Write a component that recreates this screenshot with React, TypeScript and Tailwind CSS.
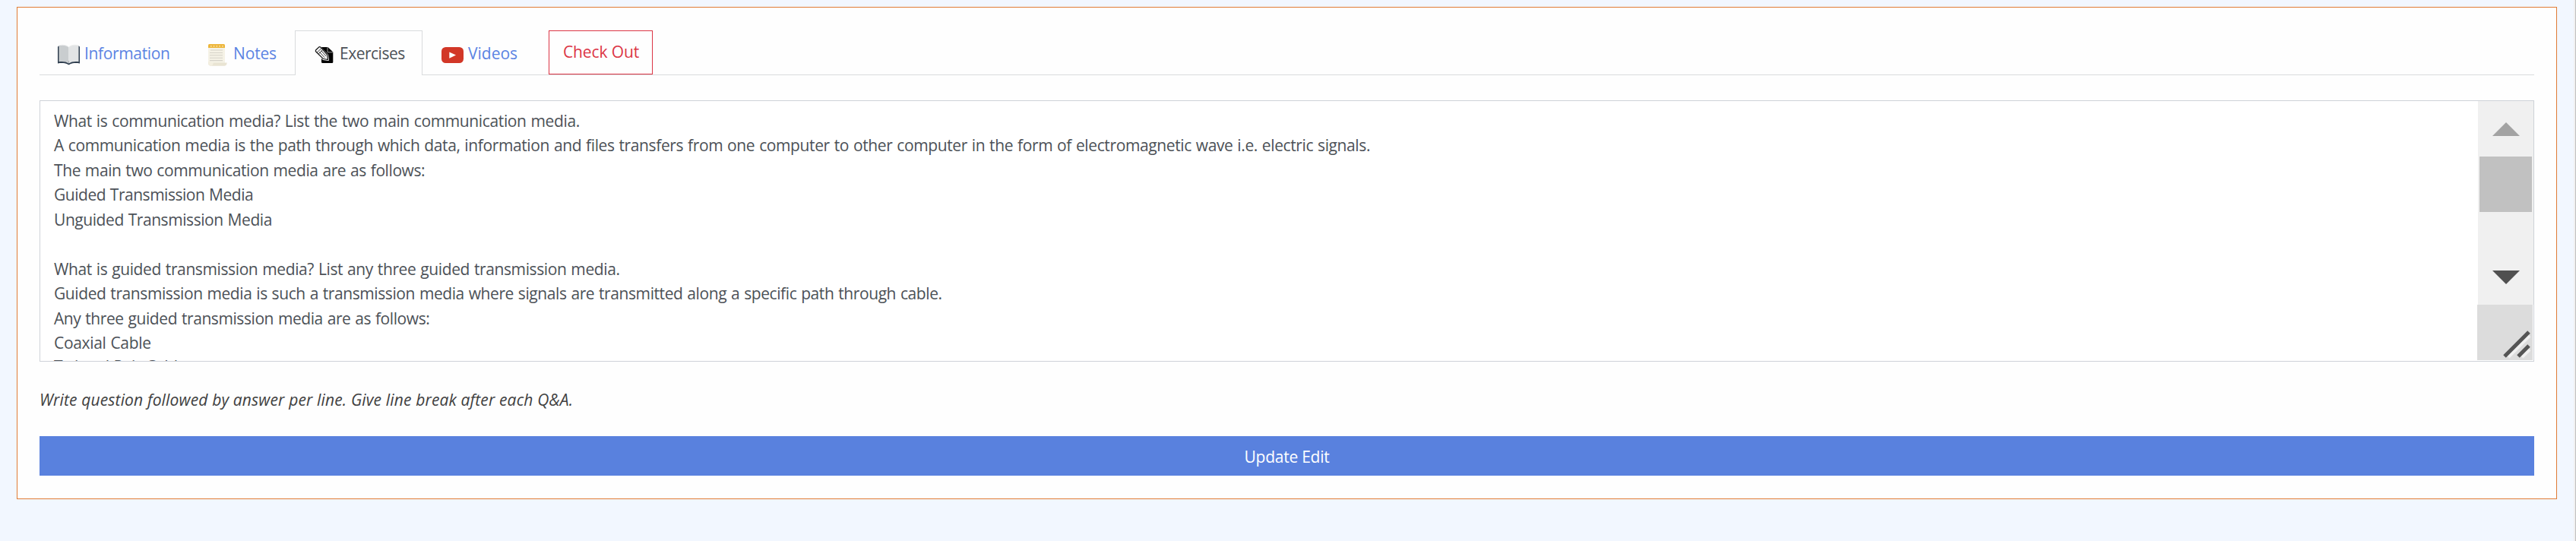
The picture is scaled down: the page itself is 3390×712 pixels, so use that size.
import type { ReactNode } from "react";

const lines = [
  { text: "What is communication media? List the two main communication media.", track: "tracking-[-0.37px]" },
  {
    text: "A communication media is the path through which data, information and files transfers from one computer to other computer in the form of electromagnetic wave i.e. electric signals.",
    track: "tracking-[-0.38px]",
  },
  { text: "The main two communication media are as follows:", track: "tracking-[-0.41px]" },
  { text: "Guided Transmission Media", track: "tracking-[-0.48px]" },
  { text: "Unguided Transmission Media", track: "tracking-[-0.43px]" },
  { text: "", track: "" },
  { text: "What is guided transmission media? List any three guided transmission media.", track: "tracking-[-0.385px]" },
  {
    text: "Guided transmission media is such a transmission media where signals are transmitted along a specific path through cable.",
    track: "tracking-[-0.41px]",
  },
  { text: "Any three guided transmission media are as follows:", track: "tracking-[-0.42px]" },
  { text: "Coaxial Cable", track: "tracking-[-0.33px]" },
  { text: "Twisted Pair Cable", track: "-mt-px tracking-[-0.38px]" },
];

function BookIcon() {
  return (
    <svg width="29" height="29" viewBox="0 0 29 29" className="shrink-0">
      <path d="M0 3.5 L2 2 V22 H27 V2 L29 3.5 V25.5 C24 24.6 19.5 25 16.5 26.3 Q14.5 28 12.5 26.3 C9.500 25 5 24.600 0 25.500 Z" fill="#2f3e4f" />
      <path d="M1.500 2 C6 0.600 11 1.200 14.500 4 V25.500 C11 23 6 22.500 1.500 23.300 Z" fill="#c9cdcf" />
      <path d="M27.500 2 C23 0.600 18 1.200 14.500 4 V25.500 C18 23 23 22.500 27.500 23.300 Z" fill="#e2e4e5" />
      <path d="M1.500 2 C6 0.600 11 1.200 14.500 4 C18 1.200 23 0.600 27.500 2" fill="none" stroke="#eceeee" strokeWidth="1" />
    </svg>
  );
}

function NotesIcon() {
  return (
    <svg width="29" height="29" viewBox="0 0 29 29" className="shrink-0">
      <path d="M2 4 H24 V26 H6 Q2 28 2 24 Z" fill="#f5f2e6" />
      <path d="M3.500 0 H22.500 Q24 0 24 1.500 V5 H2 V1.500 Q2 0 3.500 0 Z" fill="#edb63c" />
      <path d="M5 2.700 H22" stroke="#fbeabb" strokeWidth="1.500" strokeDasharray="1.500 2.300" />
      <path d="M5 8 H21 M4 11.500 H21 M4 14.800 H21 M4 18.200 H21 M4 21.600 H21" stroke="#d5d2c8" strokeWidth="1.100" />
      <path d="M2 23 V25 Q2 28.800 6 28.800 H23.500 Q26.500 28.500 26.700 24.600 H8.500 Q8.500 27.500 6.500 27 Q5 26.500 6 24.500 Z" fill="#e9e4d3" />
      <path d="M2 23 Q2 28.800 6 28.800 Q8.500 28.500 8.500 24.500 Z" fill="#f3efe0" />
    </svg>
  );
}

function ExercisesIcon() {
  return (
    <svg width="29" height="29" viewBox="0 0 29 29" className="shrink-0">
      <path d="M12 4 H19.500 L26.300 10.500 V23.500 Q26.300 25 25 25 H12.500 Q11 25 11 23.500 V5 Q11 4 12 4 Z" fill="#050505" />
      <path d="M19 4 V10.800 H26" fill="none" stroke="#a8a8a8" strokeWidth="0.900" />
      <path d="M3 8.500 L8.500 3.500 L19 14.500 L20 21 L13.500 20 Z" fill="#fff" stroke="#fff" strokeWidth="2" strokeLinejoin="round" />
      <path d="M3.500 8 L8 3.800 Q9 3.300 10 4.200 L18.600 14 L19.500 20.500 L13.200 19.300 L3.800 10 Q2.800 9 3.500 8 Z" fill="#fff" stroke="#151515" strokeWidth="1.200" />
      <path d="M5 11.300 L11 5.500 M7.200 13 L12.800 7.500 M8.500 10.500 L15.300 17.800 M10.700 8.700 L17.200 16" fill="none" stroke="#1b1b1b" strokeWidth="0.900" />
    </svg>
  );
}

function VideosIcon() {
  return (
    <svg width="29" height="29" viewBox="0 0 29 29" className="shrink-0">
      <rect x="0" y="4" width="29" height="21" rx="5.500" fill="#d23727" />
      <path d="M10.300 10.600 L19 14.600 L10.300 18.700 Z" fill="#fff" />
    </svg>
  );
}

function Tab({ icon, label, className }: { icon: ReactNode; label: string; className: string }) {
  return (
    <a className={"flex gap-1.5 " + className}>
      <span className="pt-1">{icon}</span>
      <span className="whitespace-nowrap">{label}</span>
    </a>
  );
}

function Scrollbar() {
  return (
    <div className="flex w-[74px] flex-col">
      <div className="ml-px flex h-[268px] flex-col items-center bg-[#f0f0f0]">
        <svg width="36" height="18" viewBox="0 0 36 18" className="mt-7 shrink-0">
          <path d="M18 0 L36 18 H0 Z" fill="#a3a3a3" />
        </svg>
        <div className="mt-[27px] h-[73px] w-[69px] shrink-0 bg-[#c1c1c1]" />
        <svg width="36" height="18" viewBox="0 0 36 18" className="mt-[77px] shrink-0">
          <path d="M0 0 H36 L18 18 Z" fill="#505050" />
        </svg>
      </div>
      <div className="mr-px h-[73px] bg-[#dcdcdc]">
        <svg width="73" height="73" viewBox="0 0 73 73" fill="none">
          <path d="M41 69 L69 41 M59 69 L69 59" stroke="#f1f1f1" strokeWidth="4" />
          <path d="M36 68 L68 36 M54 68 L68 54" stroke="#555" strokeWidth="5" />
        </svg>
      </div>
    </div>
  );
}

export default function App() {
  return (
    <div className="flex h-[712px] w-[3390px] bg-[#f2f7ff] font-['Open_Sans','Noto_Sans',sans-serif] text-[21px] leading-[32.4px] text-[#4c5157]">
      <div className="flex-1 pt-[9px] pr-[22px] pl-[22px]">
        <main className="h-[648px] border border-[#e07b34] bg-[#fefefe] px-[29px] pt-[30px]">
          <nav className="flex h-[59px] border-b border-[#d9dbdd] text-[#5b84e3]">
            <Tab icon={<BookIcon />} label="Information" className="w-[198px] pt-[14px] pl-6 tracking-[-0.35px]" />
            <Tab icon={<NotesIcon />} label="Notes" className="w-[138px] pt-[14px] pl-[22px] tracking-[-0.15px]" />
            <Tab
              icon={<ExercisesIcon />}
              label="Exercises"
              className="h-[59px] w-[168px] border-x border-t border-[#d9dbdd] bg-[#fefefe] pt-[13px] pl-[23px] tracking-[-0.5px] text-[#4c5157]"
            />
            <Tab icon={<VideosIcon />} label="Videos" className="w-[166px] pt-[14px] pl-[25px]" />
            <button className="h-[58px] w-[137px] border border-[#dc3545] pb-px pl-px tracking-[-0.1px] text-[#dc3545]">
              Check Out
            </button>
          </nav>

          <div className="mt-[33px] flex h-[344px] justify-between overflow-hidden border border-[#ced2d8] bg-white">
            <div className="h-[342px] overflow-hidden pt-[10px] pl-[18px] [word-spacing:0.8px]">
              {lines.map((line, i) => (
                <p key={i} className={"h-[32.45px] whitespace-nowrap " + line.track}>
                  {line.text}
                </p>
              ))}
            </div>
            <Scrollbar />
          </div>

          <p className="mt-[34px] h-16 tracking-[0.15px] text-[#404040] italic">
            Write question followed by answer per line. Give line break after each Q&amp;A.
          </p>

          <button className="block h-[52px] w-full bg-[#5981de] pt-[2px] tracking-[-0.24px] text-white">Update Edit</button>
        </main>
      </div>
      <div className="w-[3px] border-r border-[#c0c0c0] bg-[#f0f0f0]" />
    </div>
  );
}
